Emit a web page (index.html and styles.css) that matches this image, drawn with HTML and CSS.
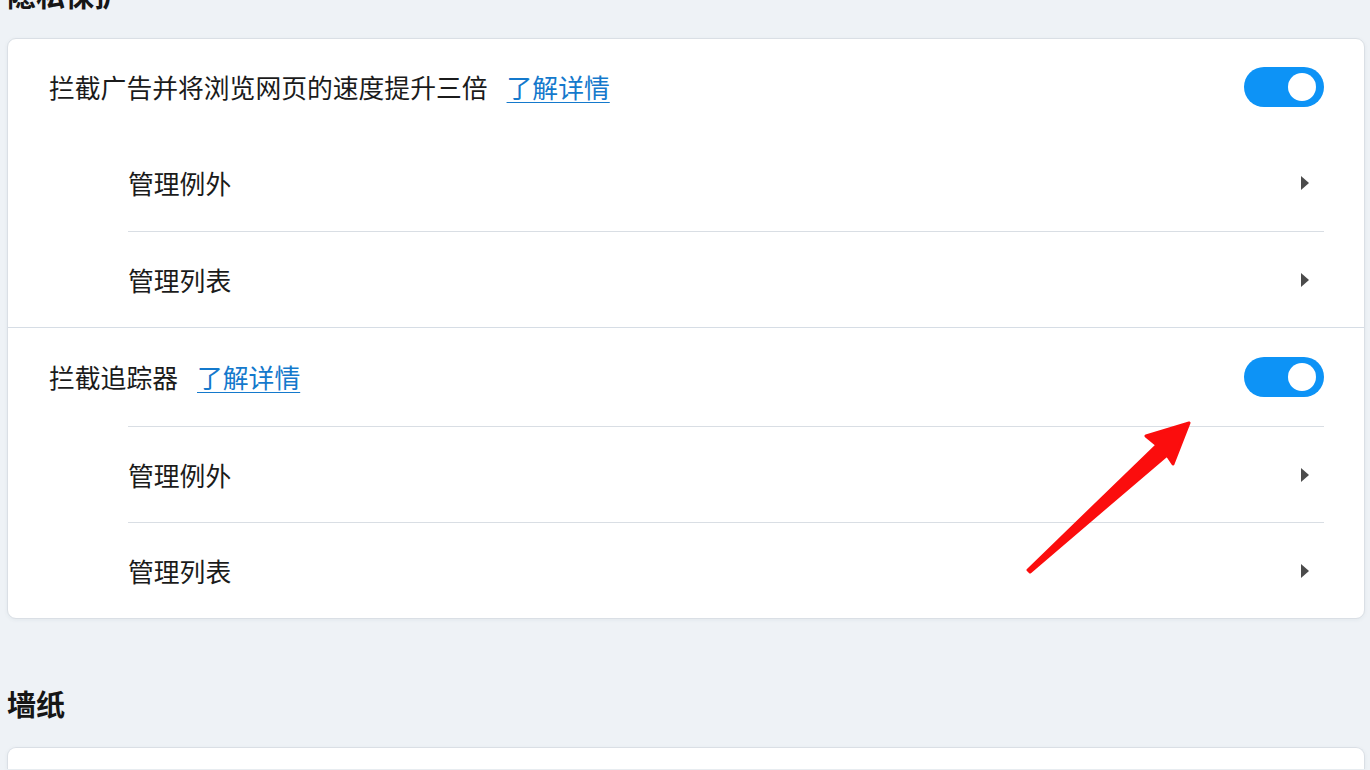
FILE: index.html
```html
<!DOCTYPE html>
<html lang="zh-CN">
<head>
    <meta charset="UTF-8">
    <meta name="viewport" content="width=device-width, initial-scale=1.0">
    <title>设置</title>
    <link rel="stylesheet" href="styles.css">
</head>
<body>
    <div class="settings">
        <h2 class="section-title first">隐私保护</h2>
        <div class="card">
            <div class="group">
                <div class="row main-row">
                    <span class="label">拦截广告并将浏览网页的速度提升三倍</span>
                    <a class="more" href="#">了解详情</a>
                    <span class="toggle on"><span class="knob"></span></span>
                </div>
                <div class="row sub-row no-line">
                    <span class="label">管理例外</span>
                    <svg class="chevron" width="8" height="14" viewBox="0 0 8 14"><path d="M0 0 L8 7 L0 14 Z" fill="#4b4b4b"/></svg>
                </div>
                <div class="row sub-row">
                    <span class="label">管理列表</span>
                    <svg class="chevron" width="8" height="14" viewBox="0 0 8 14"><path d="M0 0 L8 7 L0 14 Z" fill="#4b4b4b"/></svg>
                </div>
            </div>
            <div class="group">
                <div class="row main-row tall">
                    <span class="label">拦截追踪器</span>
                    <a class="more" href="#">了解详情</a>
                    <span class="toggle on"><span class="knob"></span></span>
                </div>
                <div class="row sub-row">
                    <span class="label">管理例外</span>
                    <svg class="chevron" width="8" height="14" viewBox="0 0 8 14"><path d="M0 0 L8 7 L0 14 Z" fill="#4b4b4b"/></svg>
                </div>
                <div class="row sub-row">
                    <span class="label">管理列表</span>
                    <svg class="chevron" width="8" height="14" viewBox="0 0 8 14"><path d="M0 0 L8 7 L0 14 Z" fill="#4b4b4b"/></svg>
                </div>
            </div>
        </div>

        <h2 class="section-title">墙纸</h2>
        <div class="card short"></div>
    </div>

    <!-- annotation arrow -->
    <svg class="arrow" width="1370" height="770" viewBox="0 0 1370 770">
        <polygon points="1189,423 1146,436 1157,445 1028,570 1030,572 1167,455 1173,464" fill="#fb0d0d" stroke="#fb0d0d" stroke-width="3" stroke-linejoin="round"/>
    </svg>
</body>
</html>
```

FILE: styles.css
```css
* {
    margin: 0;
    padding: 0;
    box-sizing: border-box;
}

body {
    font-family: "Noto Sans CJK SC", "Noto Sans", sans-serif;
    background: #eef2f6;
    color: #1b1b1b;
    overflow: hidden;
    height: 770px;
}

.settings {
    padding: 0 5px 0 7px;
}

/* Section headings */
.section-title {
    font-size: 29px;
    font-weight: 600;
    line-height: 40px;
    margin: 64px 0 24px;
    color: #161616;
}

.section-title.first {
    margin-top: -26px;
}

/* Cards */
.card {
    background: #fff;
    border: 1px solid #dadfe5;
    border-radius: 9px;
    box-shadow: 0 1px 4px rgba(40, 60, 90, 0.06);
}

.card.short {
    height: 22px;
    border-bottom: none;
    border-radius: 9px 9px 0 0;
}

.group + .group {
    border-top: 1px solid #d6dde5;
}

/* Rows */
.row {
    display: flex;
    align-items: center;
    font-size: 25.8px;
    line-height: 36px;
}

.main-row {
    height: 96px;
    padding: 0 40px 0 41px;
}

.main-row.tall {
    height: 98px;
}

.sub-row {
    height: 96px;
    margin: 0 40px 0 120px;
    padding: 0 15px 0 0;
    border-top: 1px solid #d9dee4;
}

.sub-row.no-line {
    border-top: none;
}

.label {
    flex: 0 0 auto;
}

.sub-row .label {
    flex: 1;
}

.more {
    margin-left: 19px;
    color: #1479cc;
    text-decoration: underline;
    text-underline-offset: 4px;
    text-decoration-thickness: 1px;
}

/* Toggle switch */
.toggle {
    margin-left: auto;
    width: 80px;
    height: 40px;
    border-radius: 20px;
    background: #0d93f6;
    display: flex;
    align-items: center;
    justify-content: flex-end;
    padding-right: 8px;
}

.knob {
    width: 28px;
    height: 28px;
    border-radius: 50%;
    background: #fff;
}

.chevron {
    display: block;
}

/* Annotation */
.arrow {
    position: absolute;
    left: 0;
    top: 0;
    pointer-events: none;
}
```
